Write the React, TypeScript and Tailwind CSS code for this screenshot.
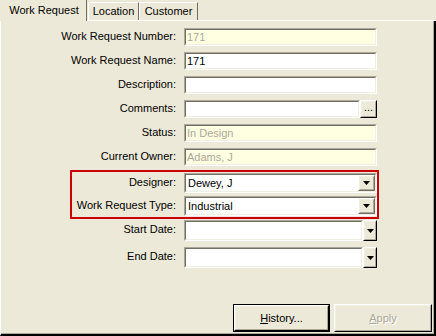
import type { ReactNode } from 'react';

const FONT = { fontFamily: '"Liberation Sans", Arial, sans-serif' };

function Arrow() {
  return (
    <svg width="7" height="4" viewBox="0 0 7 4" className="block">
      <path d="M0 0h7L3.5 4z" fill="#000" />
    </svg>
  );
}

// XP classic sunken edge
function Sunken({ children, className = '', bg = 'bg-white' }: { children?: ReactNode; className?: string; bg?: string }) {
  return (
    <div className={`border border-t-[#ACA899] border-l-[#ACA899] border-b-white border-r-white ${className}`}>
      <div className={`h-full border border-t-[#716F64] border-l-[#716F64] border-b-[#F1EFE2] border-r-[#F1EFE2] ${bg} flex items-center`}>
        {children}
      </div>
    </div>
  );
}

// raised button bevel
function Raised({ children, className = '', dark = false }: { children?: ReactNode; className?: string; dark?: boolean }) {
  return (
    <div
      className={`border border-t-white border-l-white ${dark ? 'border-b-black border-r-black' : 'border-b-[#716F64] border-r-[#716F64]'} bg-[#ECE9D8] ${className}`}
    >
      <div className="h-full border border-t-[#F1EFE2] border-l-[#F1EFE2] border-b-[#ACA899] border-r-[#ACA899] flex items-center justify-center">
        {children}
      </div>
    </div>
  );
}

function TextField({ value = '', disabled = false }: { value?: string; disabled?: boolean }) {
  return (
    <Sunken className="w-[193px] h-[18px]" bg={disabled ? 'bg-[#FFFFE1]' : 'bg-white'}>
      <span className={`pl-[1px] text-[11px] leading-none ${disabled ? 'text-[#ACA899]' : 'text-black'}`}>{value}</span>
    </Sunken>
  );
}

function Combo({ value }: { value: string }) {
  return (
    <Sunken className="w-[193px] h-[20px]">
      <span className="flex-1 pl-[2px] text-[11px] leading-none text-black">{value}</span>
      <Raised className="w-[17px] h-full">
        <Arrow />
      </Raised>
    </Sunken>
  );
}

function DateField() {
  return (
    <div className="flex w-[193px] h-[21px]">
      <Sunken className="w-[179px] h-full" />
      <Raised dark className="w-[14px] h-full">
        <Arrow />
      </Raised>
    </div>
  );
}

function Row({ label, children, className = '' }: { label: string; children: ReactNode; className?: string }) {
  return (
    <div className={`flex items-center gap-[8px] ${className}`}>
      <div className="w-[175px] text-right text-[11px] leading-none text-black -mt-[2px]">{label}</div>
      {children}
    </div>
  );
}

export default function App() {
  return (
    <div className="relative w-[436px] h-[336px] bg-[#ECE9D8] flex flex-col text-black" style={FONT}>
      {/* tabs */}
      <div className="flex h-[21px] shrink-0">
        <div className="w-[87px] h-[21px] border-r border-r-[#716F64] flex items-center justify-center text-[11px] pl-[2px]">
          Work Request
        </div>
        <div className="flex flex-col justify-end">
          <div className="w-[51px] h-[18px] border-t border-l border-t-white border-l-white border-r border-r-[#716F64] flex items-center justify-center text-[11px] ml-[1px]">
            Location
          </div>
          <div className="h-[1px] bg-white" />
        </div>
        <div className="flex flex-col justify-end">
          <div className="w-[59px] h-[18px] border-t border-l border-t-white border-l-white border-r border-r-[#716F64] flex items-center justify-center text-[11px]">
            Customer
          </div>
          <div className="h-[1px] bg-white" />
        </div>
        <div className="flex-1 flex flex-col justify-end">
          <div className="h-[1px] bg-white" />
        </div>
      </div>

      {/* panel */}
      <div className="flex-1 flex border-l border-l-white border-r-2 border-b-2 border-black">
        <div className="flex-1 flex flex-col border-r border-b border-[#ACA899] pt-[7px]">
          <Row label="Work Request Number:">
            <TextField value="171" disabled />
          </Row>
          <Row label="Work Request Name:" className="mt-[6px]">
            <TextField value="171" />
          </Row>
          <Row label="Description:" className="mt-[6px]">
            <TextField />
          </Row>
          <Row label="Comments:" className="mt-[6px]">
            <div className="flex w-[193px] h-[18px]">
              <Sunken className="w-[176px] h-full" />
              <Raised dark className="w-[17px] h-full">
                <span className="text-[11px] leading-none -mt-[3px]">...</span>
              </Raised>
            </div>
          </Row>
          <Row label="Status:" className="mt-[6px]">
            <TextField value="In Design" disabled />
          </Row>
          <Row label="Current Owner:" className="mt-[6px]">
            <TextField value="Adams, J" disabled />
          </Row>
          <Row label="Designer:" className="mt-[7px]">
            <Combo value="Dewey, J" />
          </Row>
          <Row label="Work Request Type:" className="mt-[3px]">
            <Combo value="Industrial" />
          </Row>
          <Row label="Start Date:" className="mt-[4px]">
            <DateField />
          </Row>
          <Row label="End Date:" className="mt-[6px]">
            <DateField />
          </Row>

          <div className="mt-auto mb-[1px] mr-[1px] flex justify-end gap-[4px]">
            <div className="w-[97px] h-[28px] border border-black">
              <Raised dark className="h-full">
                <span className="text-[11px] leading-none">
                  <span className="underline">H</span>istory...
                </span>
              </Raised>
            </div>
            <Raised dark className="w-[98px] h-[28px]">
              <span className="text-[11px] leading-none text-[#ACA899] [text-shadow:1px_1px_0_#fff]">
                <span className="underline">A</span>pply
              </span>
            </Raised>
          </div>
        </div>
      </div>

      {/* highlight annotation */}
      <div className="absolute left-[70px] top-[170px] w-[309px] h-[49px] border-2 border-[#CC0000] pointer-events-none" />
    </div>
  );
}
